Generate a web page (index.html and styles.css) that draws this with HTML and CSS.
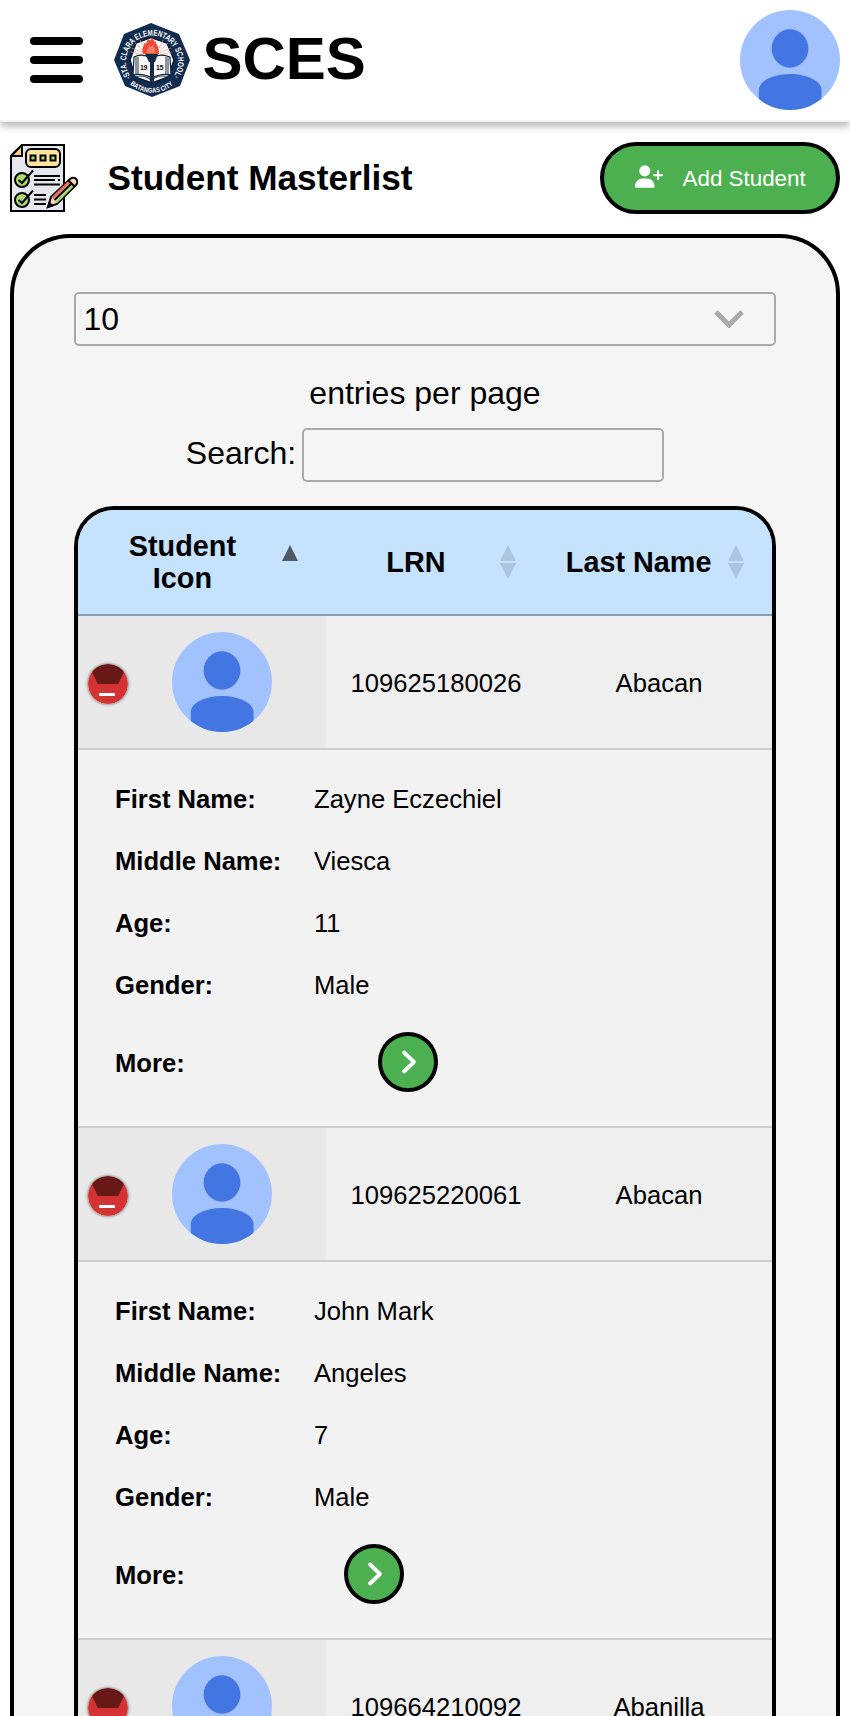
FILE: index.html
```html
<!DOCTYPE html>
<html lang="en">
<head>
<meta charset="utf-8">
<title>Student Masterlist</title>
<link rel="stylesheet" href="styles.css">
</head>
<body>
<svg class="defs" aria-hidden="true">
  <symbol id="avatar" viewBox="0 0 100 100">
    <clipPath id="avatar-clip"><circle cx="50" cy="50" r="50"/></clipPath>
    <g clip-path="url(#avatar-clip)">
      <rect width="100" height="100" fill="#a2c1ff"/>
      <ellipse cx="50" cy="38.500" rx="18.400" ry="19.200" fill="#4376e2"/>
      <path d="M18.800 100V80C18.800 71 33 64 50 64S81.500 71 81.500 80V100Z" fill="#4376e2"/>
    </g>
  </symbol>
  <symbol id="collapse" viewBox="0 0 40 40">
    <clipPath id="collapse-clip"><circle cx="20" cy="20" r="20"/></clipPath>
    <g clip-path="url(#collapse-clip)">
      <rect width="40" height="40" fill="#d33333"/>
      <path d="M0 0H40L30 20H10Z" fill="#671818"/>
    </g>
    <rect x="11" y="29" width="16" height="3" rx="1" fill="#fff"/>
  </symbol>
  <symbol id="chevron" viewBox="0 0 20 28">
    <path d="M6 4.500L16 14L6 23.500" fill="none" stroke="#fff" stroke-width="3.800" stroke-linecap="round" stroke-linejoin="round"/>
  </symbol>
  <symbol id="sort" viewBox="0 0 16 34">
    <path d="M8 0L16 16H0ZM0 18H16L8 34Z"/>
  </symbol>
</svg>

<header class="topbar">
  <div class="menu"><span></span><span></span><span></span></div>
  <svg class="seal" viewBox="0 0 76 74">
    <path d="M37 0L65 11L76 37L66 63L38 74L11 63L0 37L10 11Z" fill="#122c50"/>
    <path d="M37 14.500L53 20L60 37L54 54L38 60L21 54L16 37L22 20Z" fill="#fff" stroke="#071a35" stroke-width="1.500"/>
    <g stroke="#ee9183" stroke-width=".7">
      <path d="M29 30L18 25M29 28L21 20M30 25L26 17M29 32L17 29M46 30L57 25M46 28L54 20M45 25L49 17M46 32L58 29"/>
    </g>
    <path d="M20 34Q28 30 37 35Q46 30 56 34L57 52Q47 50 38 55Q29 50 19 52Z" fill="#fafafa" stroke="#15263d" stroke-width="1.200"/>
    <path d="M22 34V51M24 34V51M52 34V51M54 34V51M21 54Q30 51 37 57Q46 51 55 54" fill="none" stroke="#33435a" stroke-width="1.100"/>
    <path d="M29 31C27 25 30 25 30 20C33 22 32 19 34 16C36 17 36 19 38 14.500C40 17 40 20 42 18C41 22 45 20 45 31Z" fill="#ef4b37"/>
    <path d="M33 30C32 26 34 27 35 23C37 25 38 23 39 21C39 26 43 25 41 30Z" fill="#fb8066"/>
    <path d="M31 31H44L41 39H40V60H36V39H35Z" fill="#122947"/>
    <g class="seal-year"><text x="26" y="47" textLength="7.500">19</text><text x="42" y="47" textLength="7.500">15</text></g>
    <path id="seal-top" d="M17 54A26 26 0 1 1 59 54" fill="none"/>
    <path id="seal-bottom" d="M15.500 60.500A32 32 0 0 0 60.500 60.500" fill="none"/>
    <text class="seal-text"><textPath href="#seal-top" textLength="113" lengthAdjust="spacingAndGlyphs">·STA. CLARA ELEMENTARY SCHOOL·</textPath></text>
    <text class="seal-text seal-city"><textPath href="#seal-bottom" startOffset="1" textLength="47" lengthAdjust="spacingAndGlyphs">BATANGAS CITY</textPath></text>
  </svg>
  <h1 class="brand">SCES</h1>
  <svg class="avatar"><use href="#avatar"/></svg>
</header>

<div class="heading">
  <svg class="list-icon" viewBox="0 0 68 68">
    <path d="M12 1H54V67H1V12Z" fill="#e4e7ee" stroke="#000" stroke-width="2"/>
    <path d="M12 1V12H1Z" fill="#f6cd78" stroke="#000" stroke-width="2"/>
    <rect x="16" y="5" width="34" height="18" rx="5" fill="#fde69c" stroke="#000" stroke-width="2"/>
    <g fill="#a9d96f" stroke="#000" stroke-width="2">
      <path d="M20.500 11.500h5v5h-5zM30.500 11.500h5v5h-5zM40.500 11.500h5v5h-5z"/>
      <circle cx="12" cy="36" r="7"/><circle cx="12" cy="56" r="7"/>
    </g>
    <path d="M8.500 36L12 39L23 26.500M8.500 56L12 59L23 46.500M24 32H50M24 36H45M48 36H50M24 40.500H50M24 51H36M24 55.500H36M24 60H36" fill="none" stroke="#000" stroke-width="2"/>
    <path d="M38 63L41 53L60 35Q64 32 67 36Q68 39 66 41L47 60Z" fill="#f8d7ad" stroke="#000" stroke-width="2"/>
    <path d="M42.500 54L59 38" stroke="#e76b58" stroke-width="2.600"/>
    <path d="M46.500 58L63 41.500" stroke="#a9d96f" stroke-width="2.400"/>
    <path d="M44.500 56L61 40M58.500 36.500L65 43M38 63L39.500 59L42 61.500Z" fill="#000" stroke="#000" stroke-width="2"/>
  </svg>
  <h2 class="page-title">Student Masterlist</h2>
  <button class="add-button">
    <svg class="add-icon" viewBox="0 0 640 512"><path fill="#fff" d="M96 128a128 128 0 1 1 256 0A128 128 0 1 1 96 128zM0 482.300C0 383.800 79.800 304 178.300 304h91.400C368.200 304 448 383.800 448 482.300c0 16.400-13.300 29.700-29.700 29.700H29.700C13.300 512 0 498.700 0 482.300zM504 312V248H440c-13.300 0-24-10.700-24-24s10.700-24 24-24h64V136c0-13.300 10.700-24 24-24s24 10.700 24 24v64h64c13.300 0 24 10.700 24 24s-10.700 24-24 24H552v64c0 13.300-10.700 24-24 24s-24-10.700-24-24z"/></svg>
    <span>Add Student</span>
  </button>
</div>

<main class="card">
  <div class="select">
    <span>10</span>
    <svg class="select-arrow" viewBox="0 0 30 18"><path d="M2 2L15 15L28 2" fill="none" stroke="#aaa" stroke-width="5"/></svg>
  </div>
  <div class="per-page">entries per page</div>
  <label class="search">Search:<input class="search-input" type="text"></label>

  <section class="table">
    <div class="row table-head">
      <div class="head-cell head-icon"><span>Student<br>Icon</span><svg class="sort sort-asc" viewBox="0 0 16 34"><path d="M8 0L16 16H0Z"/></svg></div>
      <div class="head-cell head-lrn"><span>LRN</span><svg class="sort"><use href="#sort"/></svg></div>
      <div class="head-cell head-name"><span>Last Name</span><svg class="sort"><use href="#sort"/></svg></div>
    </div>

    <div class="row">
      <div class="icon-cell"><svg class="collapse"><use href="#collapse"/></svg><svg class="avatar"><use href="#avatar"/></svg></div>
      <div class="lrn-cell">109625180026</div>
      <div class="name-cell">Abacan</div>
    </div>
    <dl class="details">
      <div class="detail"><dt>First Name:</dt><dd>Zayne Eczechiel</dd></div>
      <div class="detail"><dt>Middle Name:</dt><dd>Viesca</dd></div>
      <div class="detail"><dt>Age:</dt><dd>11</dd></div>
      <div class="detail"><dt>Gender:</dt><dd>Male</dd></div>
      <div class="detail detail-more"><dt>More:</dt><dd class="more-wide"><button class="more"><svg class="chevron"><use href="#chevron"/></svg></button></dd></div>
    </dl>

    <div class="row">
      <div class="icon-cell"><svg class="collapse"><use href="#collapse"/></svg><svg class="avatar"><use href="#avatar"/></svg></div>
      <div class="lrn-cell">109625220061</div>
      <div class="name-cell">Abacan</div>
    </div>
    <dl class="details">
      <div class="detail"><dt>First Name:</dt><dd>John Mark</dd></div>
      <div class="detail"><dt>Middle Name:</dt><dd>Angeles</dd></div>
      <div class="detail"><dt>Age:</dt><dd>7</dd></div>
      <div class="detail"><dt>Gender:</dt><dd>Male</dd></div>
      <div class="detail detail-more"><dt>More:</dt><dd class="more-narrow"><button class="more"><svg class="chevron"><use href="#chevron"/></svg></button></dd></div>
    </dl>

    <div class="row">
      <div class="icon-cell"><svg class="collapse"><use href="#collapse"/></svg><svg class="avatar"><use href="#avatar"/></svg></div>
      <div class="lrn-cell">109664210092</div>
      <div class="name-cell">Abanilla</div>
    </div>
  </section>
</main>
</body>
</html>
```

FILE: styles.css
```css
* { box-sizing: border-box; }
html, body { height: 1716px; overflow: hidden; }
body {
  margin: 0;
  display: flex;
  flex-direction: column;
  background: #fff;
  color: #000;
  font-family: "Liberation Sans", Arial, sans-serif;
}
svg { display: block; flex: none; }
h1, h2, dl, dd { margin: 0; }
button { font: inherit; padding: 0; }
.defs { width: 0; height: 0; position: absolute; }

.topbar {
  flex: none;
  display: flex;
  align-items: center;
  height: 122px;
  padding: 0 10px 0 30px;
  border-bottom: 2px solid #f2f2f2;
  box-shadow: 0 4px 8px rgba(0, 0, 0, .3);
}
.menu { display: grid; gap: 11px; width: 53px; margin: 0 31px 1px 0; }
.menu span { height: 8px; border-radius: 4px; background: #000; }
.seal { width: 76px; height: 74px; margin-right: 12.5px; overflow: visible; }
.seal-text { font-size: 8.5px; font-weight: bold; fill: #fff; }
.seal-city { font-size: 7px; }
.seal-year { font-size: 7px; font-weight: bold; fill: #111; }
.brand { flex: 1; font-size: 60px; line-height: 68px; padding-bottom: 2px; }
.avatar { width: 100px; height: 100px; }

.heading {
  flex: none;
  display: flex;
  align-items: center;
  height: 112px;
  padding: 0 10px;
}
.list-icon { width: 68px; height: 68px; margin-right: 29.5px; }
.page-title { flex: 1; font-size: 35.2px; line-height: 40px; }
.add-button {
  display: flex;
  align-items: center;
  gap: 20px;
  width: 240px;
  height: 72px;
  padding-left: 30.5px;
  border: 4px solid #000;
  border-radius: 40px;
  background: #4caf50;
  color: #fff;
  font-size: 22.4px;
}
.add-icon { width: 28px; height: 23px; margin-bottom: 4px; }
.add-button span { padding-top: 1px; }

.card {
  flex: none;
  height: 1482px;
  margin: 0 10px;
  padding: 54px 60px 0;
  border: 4px solid #000;
  border-bottom: 0;
  border-radius: 60px 60px 0 0;
  background: #f5f5f5;
  font-size: 32px;
}
.select {
  display: flex;
  align-items: center;
  justify-content: space-between;
  height: 54px;
  padding: 0 30px 0 7.5px;
  border: 2px solid #aaa;
  border-radius: 5px;
}
.select-arrow { width: 30px; height: 18px; }
.per-page { margin-top: 28px; height: 54px; line-height: 38px; text-align: center; }
.search { display: flex; justify-content: center; line-height: 50px; gap: 6px; }
.search-input {
  width: 362px;
  height: 54px;
  border: 2px solid #aaa;
  border-radius: 5px;
  background: transparent;
}

.table {
  margin-top: 24px;
  height: 1210px;
  overflow: hidden;
  border: 4px solid #000;
  border-bottom: 0;
  border-radius: 40px 40px 0 0;
  background: #f2f2f2;
  font-size: 25.6px;
}
.row {
  display: grid;
  grid-template-columns: 248px 220px 226px;
  height: 134px;
  border-bottom: 2px solid #cdcdcd;
  background: #efefef;
  text-align: center;
}
.table-head {
  height: 106px;
  border-color: #8a9eb3;
  background: #c5e2ff;
  font-size: 28.8px;
  font-weight: bold;
  line-height: 32px;
}
.head-cell { display: flex; align-items: center; justify-content: flex-end; }
.head-icon { padding-right: 28px; gap: 46px; }
.head-lrn { padding-right: 30px; gap: 54.5px; }
.head-name { padding-right: 28px; gap: 16.5px; }
.sort { width: 16px; height: 34px; fill: rgba(0, 0, 0, .125); }
.sort-asc { fill: rgba(0, 0, 0, .6); }
.icon-cell {
  display: flex;
  align-items: center;
  gap: 44px;
  padding-left: 10px;
  background: #e8e8e8;
}
.collapse { width: 40px; height: 40px; margin-top: 4px; border-radius: 50%; box-shadow: 0 0 3px #444; }
.lrn-cell, .name-cell { padding-top: 2px; line-height: 130px; }

.details { height: 378px; padding: 18px 37px; border-bottom: 2px solid #cdcdcd; }
.detail { display: grid; grid-template-columns: 199px 1fr; align-items: center; height: 62px; }
.detail-more { height: 92px; }
.detail dt { font-weight: bold; }
.detail-more dt { padding-top: 2px; }
.more-wide { padding-left: 64px; }
.more-narrow { padding-left: 30px; }
.more {
  display: grid;
  place-items: center;
  width: 60px;
  height: 60px;
  border: 4px solid #000;
  border-radius: 50%;
  background: #4caf50;
}
.chevron { width: 20px; height: 28px; }
```
